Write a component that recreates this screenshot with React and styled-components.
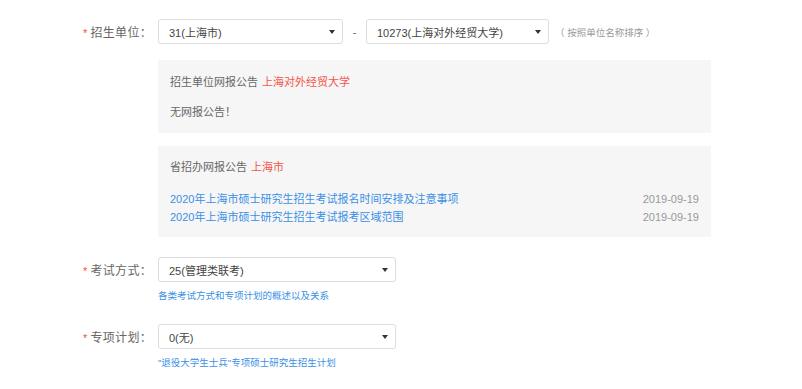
import React from "react";
import styled, { createGlobalStyle } from "styled-components";

const GlobalStyle = createGlobalStyle`
  body {
    margin: 0;
    background: #fff;
    font-family: "Liberation Sans", "Noto Sans CJK SC", sans-serif;
    color: #555;
  }
`;

const Form = styled.div`
  padding-top: 19px;
  width: 802px;
`;

const Row = styled.div`
  display: flex;
  align-items: center;
  height: 25px;
  margin-top: ${(p) => p.$top || 0}px;
`;

const Label = styled.div`
  width: 158px;
  flex: none;
  display: flex;
  justify-content: flex-end;
  align-items: center;
  padding-right: 6px;
  box-sizing: border-box;
  font-size: 12px;
  color: #666;
  letter-spacing: 0.3px;
`;

const Star = styled.span`
  color: #f0503c;
  font-size: 11px;
  line-height: 11px;
  padding-top: 4px;
  margin-right: 3px;
`;

const Select = styled.div`
  width: ${(p) => p.$w}px;
  height: 25px;
  box-sizing: border-box;
  border: 1px solid #ddd;
  border-radius: 3px;
  background: #fff;
  display: flex;
  align-items: center;
  justify-content: space-between;
  padding: 0 7px 0 10px;
  font-size: 11px;
  color: #444;
  flex: none;
`;

const Arrow = styled.span`
  width: 0;
  height: 0;
  border-left: 3px solid transparent;
  border-right: 3px solid transparent;
  border-top: 4px solid #333;
`;

const Dash = styled.span`
  width: 23px;
  text-align: center;
  font-size: 11px;
  color: #666;
`;

const Hint = styled.span`
  margin-left: 6px;
  font-size: 9.5px;
  color: #999;
`;

const Indent = styled.div`
  margin-left: 158px;
  width: 553px;
`;

const Panel = styled.div`
  background: #f6f6f6;
  padding: ${(p) => p.$pad};
  margin-top: ${(p) => p.$top}px;
  font-size: 11px;
  line-height: 18px;
  color: #666;
`;

const Red = styled.span`
  color: #f5554a;
  margin-left: 4px;
`;

const Line = styled.div`
  margin-top: ${(p) => p.$top || 0}px;
`;

const NewsRow = styled.div`
  display: flex;
  justify-content: space-between;
`;

const NewsLink = styled.a`
  color: #3a90e6;
  text-decoration: none;
`;

const Date = styled.span`
  color: #999;
`;

const Note = styled.a`
  display: block;
  margin-left: 158px;
  margin-top: 7px;
  font-size: 9.5px;
  line-height: 14px;
  color: #3a90e6;
  text-decoration: none;
`;

const news = [
  { title: "2020年上海市硕士研究生招生考试报名时间安排及注意事项", date: "2019-09-19" },
  { title: "2020年上海市硕士研究生招生考试报考区域范围", date: "2019-09-19" },
];

export default function App() {
  return (
    <>
      <GlobalStyle />
      <Form>
        <Row>
          <Label>
            <Star>*</Star>招生单位：
          </Label>
          <Select $w={185}>
            <span>31(上海市)</span>
            <Arrow />
          </Select>
          <Dash>-</Dash>
          <Select $w={183}>
            <span>10273(上海对外经贸大学)</span>
            <Arrow />
          </Select>
          <Hint>（ 按照单位名称排序 ）</Hint>
        </Row>

        <Indent>
          <Panel $pad="13px 12px 12px" $top={16}>
            <Line>
              招生单位网报公告<Red>上海对外经贸大学</Red>
            </Line>
            <Line $top={12}>无网报公告！</Line>
          </Panel>
          <Panel $pad="12px 12px 11px" $top={13}>
            <Line>
              省招办网报公告<Red>上海市</Red>
            </Line>
            <Line $top={14}>
              {news.map((n) => (
                <NewsRow key={n.title}>
                  <NewsLink href="#">{n.title}</NewsLink>
                  <Date>{n.date}</Date>
                </NewsRow>
              ))}
            </Line>
          </Panel>
        </Indent>

        <Row $top={20}>
          <Label>
            <Star>*</Star>考试方式：
          </Label>
          <Select $w={238}>
            <span>25(管理类联考)</span>
            <Arrow />
          </Select>
        </Row>
        <Note href="#">各类考试方式和专项计划的概述以及关系</Note>

        <Row $top={21}>
          <Label>
            <Star>*</Star>专项计划：
          </Label>
          <Select $w={238}>
            <span>0(无)</span>
            <Arrow />
          </Select>
        </Row>
        <Note href="#">"退役大学生士兵"专项硕士研究生招生计划</Note>
      </Form>
    </>
  );
}
